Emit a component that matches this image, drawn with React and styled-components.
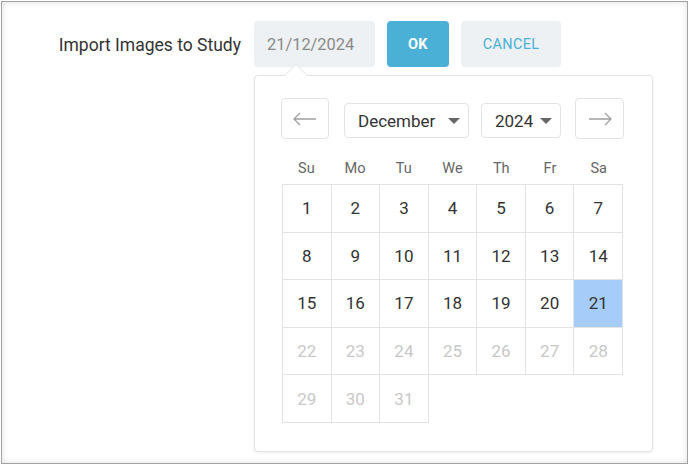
import React from 'react';
import styled, { createGlobalStyle } from 'styled-components';

const Global = createGlobalStyle`
  body { margin: 0; font-family: Roboto, "Noto Sans", sans-serif; background: #fff; }
`;

const Frame = styled.div`
  margin: 1px;
  width: 687px;
  height: 463px;
  box-sizing: border-box;
  border: 1px solid #a3a3a3;
  box-shadow: inset 0 0 7px rgba(0, 0, 0, 0.12);
  padding: 19px 0 0 0;
  overflow: hidden;
`;

const Row = styled.div`
  display: flex;
  align-items: flex-start;
`;

const Label = styled.div`
  width: 252px;
  text-align: right;
  font-size: 17.5px;
  color: #333;
  line-height: 48px;
  padding-right: 13px;
  box-sizing: border-box;
`;

const Field = styled.div`
  position: relative;
  width: 121px;
`;

const Input = styled.div`
  height: 46px;
  line-height: 47px;
  background: #eef1f4;
  border-radius: 4px;
  padding-left: 13px;
  font-size: 16.4px;
  color: #8a8a8a;
`;

const Button = styled.button`
  height: 46px;
  margin-left: ${p => p.$gap}px;
  padding: 0 ${p => p.$pad}px;
  border: none;
  border-radius: 4px;
  font-family: Roboto, sans-serif;
  font-size: 14.5px;
  font-weight: ${p => (p.$primary ? 700 : 400)};
  letter-spacing: 0.3px;
  background: ${p => (p.$primary ? '#4ab0d6' : '#eef1f4')};
  color: ${p => (p.$primary ? '#fff' : '#4ab0d6')};
`;

const Popup = styled.div`
  position: absolute;
  top: 54px;
  left: 0;
  width: 399px;
  height: 377px;
  box-sizing: border-box;
  background: #fff;
  border: 1px solid #e3e3e3;
  border-radius: 4px;
  box-shadow: 0 1px 3px rgba(0, 0, 0, 0.08);
  padding: 22px 0 0 26px;

  &::before,
  &::after {
    content: '';
    position: absolute;
    left: 29px;
    width: 0;
    height: 0;
    border: 12px solid transparent;
    border-top: none;
  }
  &::before {
    top: -12px;
    border-bottom: 12px solid #e3e3e3;
  }
  &::after {
    top: -11px;
    border-bottom: 12px solid #fff;
  }
`;

const Nav = styled.div`
  display: flex;
  align-items: flex-start;
  width: 343px;
`;

const Arrow = styled.div`
  width: ${p => p.$w}px;
  height: 41px;
  box-sizing: border-box;
  border: 1px solid #e3e3e3;
  border-radius: 4px;
  display: flex;
  align-items: center;
  justify-content: center;
  margin-left: ${p => p.$ml || 0}px;
`;

const Select = styled.div`
  height: 35px;
  width: ${p => p.$w}px;
  margin: 5px 0 0 ${p => p.$ml}px;
  box-sizing: border-box;
  border: 1px solid #e3e3e3;
  border-radius: 4px;
  display: flex;
  align-items: center;
  justify-content: space-between;
  padding: 0 8px 0 13px;
  font-size: 17px;
  color: #333;
`;

const Caret = styled.span`
  width: 0;
  height: 0;
  border-left: 6px solid transparent;
  border-right: 6px solid transparent;
  border-top: 6px solid #666;
`;

const Week = styled.div`
  display: grid;
  grid-template-columns: repeat(7, 1fr);
  width: 341px;
  margin: 21px 0 0 1px;
  height: 24px;
  font-size: 14.5px;
  color: #666;
  text-align: center;
`;

const Grid = styled.div`
  display: grid;
  grid-template-columns: repeat(7, 1fr);
  grid-auto-rows: 47.6px;
  width: 341px;
  margin-left: 1px;
  box-sizing: border-box;
  border-top: 1px solid #e3e3e3;
  border-left: 1px solid #e3e3e3;
`;

const Day = styled.div`
  display: flex;
  align-items: center;
  justify-content: center;
  border-right: 1px solid #e3e3e3;
  border-bottom: 1px solid #e3e3e3;
  font-size: 17px;
  color: ${p => (p.$muted ? '#c8c8c8' : '#333')};
  background: ${p => (p.$selected ? '#a6cdfa' : 'transparent')};
`;

const LeftArrow = () => (
  <svg width="24" height="14" viewBox="0 0 24 14" fill="none" stroke="#a0a0a0" strokeWidth="1.3">
    <path d="M23 7H1M7 1L1 7l6 6" />
  </svg>
);

const RightArrow = () => (
  <svg width="24" height="14" viewBox="0 0 24 14" fill="none" stroke="#a0a0a0" strokeWidth="1.3">
    <path d="M1 7h22M17 1l6 6-6 6" />
  </svg>
);

const days = Array.from({ length: 31 }, (_, i) => i + 1);

export default function App() {
  return (
    <>
      <Global />
      <Frame>
        <Row>
          <Label>Import Images to Study</Label>
          <Field>
            <Input>21/12/2024</Input>
            <Popup>
              <Nav>
                <Arrow $w={48}><LeftArrow /></Arrow>
                <Select $w={125} $ml={15}>December <Caret /></Select>
                <Select $w={80} $ml={12}>2024 <Caret /></Select>
                <Arrow $w={49} $ml={14}><RightArrow /></Arrow>
              </Nav>
              <Week>
                {['Su', 'Mo', 'Tu', 'We', 'Th', 'Fr', 'Sa'].map(d => <span key={d}>{d}</span>)}
              </Week>
              <Grid>
                {days.map(d => (
                  <Day key={d} $muted={d > 21} $selected={d === 21}>{d}</Day>
                ))}
              </Grid>
            </Popup>
          </Field>
          <Button $primary $gap={12} $pad={21}>OK</Button>
          <Button $gap={12} $pad={22}>CANCEL</Button>
        </Row>
      </Frame>
    </>
  );
}
